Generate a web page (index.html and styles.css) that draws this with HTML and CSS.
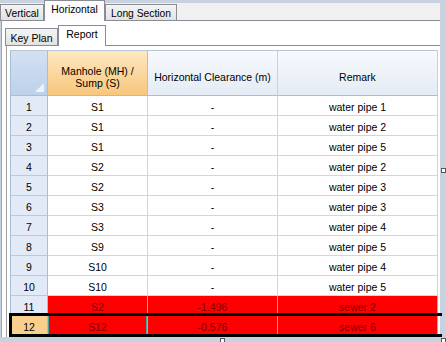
FILE: index.html
```html
<!DOCTYPE html>
<html lang="en">
<head>
  <meta charset="UTF-8" />
  <title>Horizontal Clearance Report</title>
  <link rel="stylesheet" href="styles.css">
</head>
<body>
  <div class="designer">
    <div class="tabctl">
      <div class="tabstrip">
        <div class="tab tab-vertical">Vertical</div>
        <div class="tab tab-active tab-horizontal">Horizontal</div>
        <div class="tab tab-long">Long Section</div>
      </div>
      <div class="tabpage">
        <div class="subtabs">
          <div class="subtabstrip">
            <div class="subtab subtab-key">Key Plan</div>
            <div class="subtab subtab-active subtab-report">Report</div>
          </div>
          <div class="subpage">
            <div class="grid">
              <div class="hd corner"><span class="corner-mark"></span></div>
              <div class="hd hd-sel">Manhole (MH) /<br>Sump (S)</div>
              <div class="hd">Horizontal Clearance (m)</div>
              <div class="hd">Remark</div>

              <div class="rh">1</div><div class="c">S1</div><div class="c">-</div><div class="c">water pipe 1</div>
              <div class="rh">2</div><div class="c">S1</div><div class="c">-</div><div class="c">water pipe 2</div>
              <div class="rh">3</div><div class="c">S1</div><div class="c">-</div><div class="c">water pipe 5</div>
              <div class="rh">4</div><div class="c">S2</div><div class="c">-</div><div class="c">water pipe 2</div>
              <div class="rh">5</div><div class="c">S2</div><div class="c">-</div><div class="c">water pipe 3</div>
              <div class="rh">6</div><div class="c">S3</div><div class="c">-</div><div class="c">water pipe 3</div>
              <div class="rh">7</div><div class="c">S3</div><div class="c">-</div><div class="c">water pipe 4</div>
              <div class="rh">8</div><div class="c">S9</div><div class="c">-</div><div class="c">water pipe 5</div>
              <div class="rh">9</div><div class="c">S10</div><div class="c">-</div><div class="c">water pipe 4</div>
              <div class="rh">10</div><div class="c">S10</div><div class="c">-</div><div class="c">water pipe 5</div>
              <div class="rh">11</div><div class="c bad">S2</div><div class="c bad">-1.496</div><div class="c bad">sewer 2</div>
              <div class="rh rh-sel">12</div><div class="c bad focus">S12</div><div class="c bad">-0.576</div><div class="c bad">sewer 6</div>
            </div>
          </div>
        </div>
      </div>
    </div>

    <div class="row-frame"></div>
    <div class="handle handle-right"></div>
    <div class="handle handle-bottom"></div>
    <div class="handle handle-corner"></div>
  </div>
</body>
</html>
```

FILE: styles.css
```css
body {
  margin: 0;
  font-family: 'Liberation Sans', Arial, sans-serif;
  font-size: 10.5px;
  color: #000;
  background: #c8d1de;
}
.designer {
  position: relative;
  width: 446px;
  height: 342px;
  overflow: hidden;
  background: #c8d1de;
}
.tabctl {
  width: 440px;
  height: 337px;
  display: flex;
  flex-direction: column;
}

/* outer tabs */
.tabstrip {
  height: 20px;
  display: flex;
  align-items: flex-end;
  background: linear-gradient(#c8d1de 0 3px, #f0f0f0 3px);
  border-bottom: 1px solid #898c95;
  font-size: 10.3px;
}
.tab {
  box-sizing: border-box;
  height: 16px;
  border: 1px solid #898c95;
  border-bottom: none;
  background: linear-gradient(#f4f4f4, #e2e2e2);
  display: flex;
  align-items: center;
  justify-content: center;
  padding-top: 1px;
}
.tab-vertical { width: 44px; }
.tab-horizontal { width: 61px; }
.tab-long { width: 72px; }
.tab-active {
  height: 21px;
  margin-bottom: -1px;
  background: #fcfcfc;
  padding-top: 0;
  padding-bottom: 3px;
  position: relative;
}

.tabpage {
  flex: 1;
  background: #fff;
  margin-left: 1px;
  border-left: 1px solid #a0a0a0;
  display: flex;
}
.subtabs {
  flex: 1;
  margin-left: 4px;
  display: flex;
  flex-direction: column;
}
.subtabstrip {
  height: 24px;
  display: flex;
  align-items: flex-end;
  margin-left: -1px;
  border-bottom: 1px solid #898c95;
  font-size: 10.5px;
}
.subtab {
  box-sizing: border-box;
  height: 17px;
  border: 1px solid #898c95;
  border-bottom: none;
  background: linear-gradient(#f4f4f4, #e2e2e2);
  display: flex;
  align-items: center;
  justify-content: center;
  padding-top: 1px;
}
.subtab-key { width: 53px; }
.subtab-report { width: 48px; }
.subtab-active {
  height: 21px;
  margin-bottom: -1px;
  background: #fff;
  padding-top: 0;
  padding-bottom: 4px;
}
.subpage {
  flex: 1;
  border-left: 1px solid #a0a0a0;
  padding: 4px 0 0 3px;
  overflow: hidden;
}

/* grid */
.grid {
  display: grid;
  grid-template-columns: 37px 100px 130px 160px;
  grid-template-rows: 45px;
  grid-auto-rows: 20px;
  border-top: 1px solid #b7c6d8;
  border-left: 1px solid #a9bdd4;
  width: 428px;
  box-sizing: border-box;
}
.grid > div {
  box-sizing: border-box;
  border-right: 1px solid #d5d5d5;
  border-bottom: 1px solid #d5d5d5;
  display: flex;
  align-items: center;
  justify-content: center;
  text-align: center;
  padding-top: 3px;
  white-space: nowrap;
}
.grid > .hd {
  background: linear-gradient(#f7f9fc, #e4ecf5);
  border-right-color: #c3d2e3;
  border-bottom-color: #a9bdd4;
  padding-top: 8px;
  line-height: 12px;
}
.grid > .hd-sel {
  background: linear-gradient(#fde9c0, #f8c67c);
  border-right-color: #e0b878;
}
.grid > .corner {
  background: linear-gradient(#d3e1f2, #bcd1ea);
  border-right-color: #a9bdd4;
  position: relative;
}
.corner-mark {
  position: absolute;
  right: 3px;
  bottom: 3px;
  width: 0;
  height: 0;
  border-left: 9px solid transparent;
  border-bottom: 9px solid #eef4fb;
}
.grid > .rh {
  background: #e1eaf6;
  border-right-color: #a9bdd4;
  border-bottom-color: #b9cadf;
}
.grid > .rh-sel {
  background: #f9cf8e;
}
.grid > .bad {
  background: #ff0000;
  color: #800000;
  border-right-color: #ff8a8a;
  border-bottom-color: #e00000;
}
.grid > .focus {
  box-shadow: inset 1px 0 0 #4aa3a3, inset -1px 0 0 #4aa3a3;
}

/* overlays */
.row-frame {
  position: absolute;
  left: 9px;
  top: 313px;
  width: 433px;
  height: 24px;
  box-sizing: border-box;
  border: 3px solid #000;
  border-right: none;
}
.handle {
  position: absolute;
  width: 5px;
  height: 5px;
  box-sizing: border-box;
  background: #fff;
  border: 1px solid #555;
}
.handle-right { left: 441px; top: 168px; }
.handle-bottom { left: 220px; top: 338px; }
.handle-corner { left: 441px; top: 338px; }
```
